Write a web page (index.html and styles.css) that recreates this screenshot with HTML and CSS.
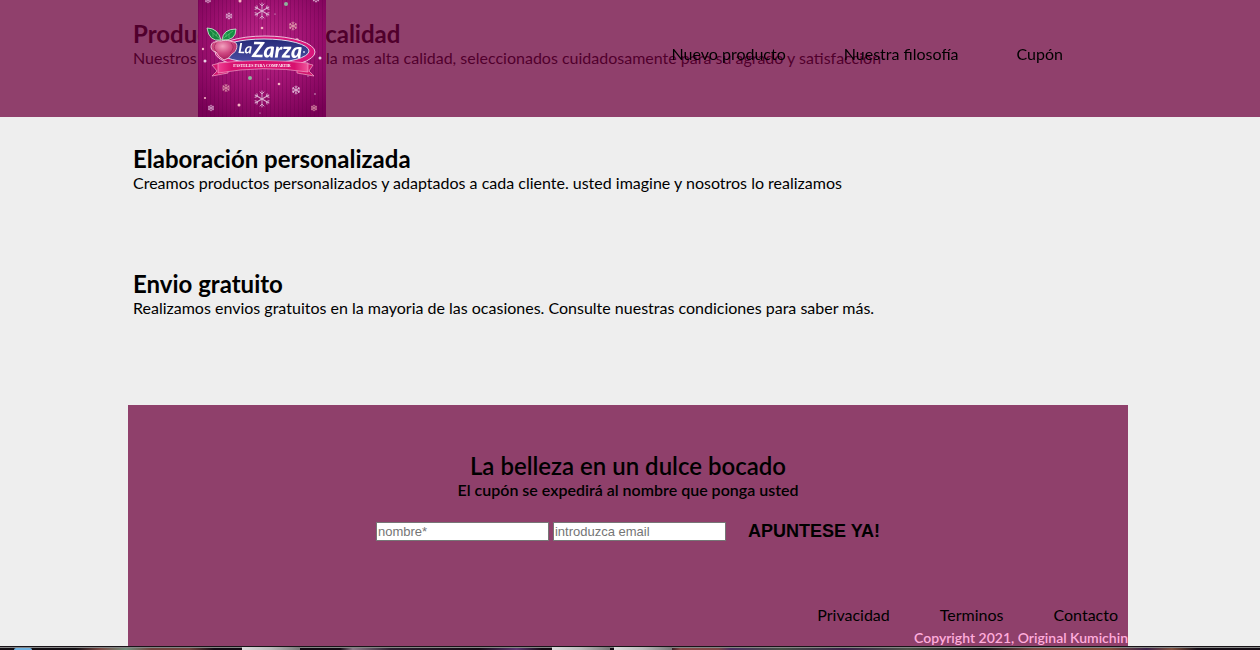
FILE: index.html
```
<!DOCTYPE html>
<html lang="es">
<head>
<meta charset="utf-8">
<title>La Zarza</title>
<link rel="stylesheet" href="styles.css">
</head>
<body>
<header class="header">
  <svg class="logo" viewBox="0 0 128 117" role="img" aria-label="La Zarza">
    <defs>
      <radialGradient id="glow" cx="50%" cy="38%" r="72%">
        <stop offset="0" stop-color="#bd2888"/><stop offset=".5" stop-color="#a01272"/><stop offset="1" stop-color="#780055"/>
      </radialGradient>
      <pattern id="stripes" width="4" height="4" patternUnits="userSpaceOnUse">
        <rect width="1" height="4" fill="#5c0045" opacity=".28"/>
      </pattern>
      <linearGradient id="blue" x1="0" y1="0" x2="0" y2="1">
        <stop offset="0" stop-color="#262b78"/><stop offset="1" stop-color="#4b50a5"/>
      </linearGradient>
      <linearGradient id="ribbon">
        <stop offset="0" stop-color="#ef3f93"/><stop offset=".15" stop-color="#d8116f"/><stop offset=".85" stop-color="#d8116f"/><stop offset="1" stop-color="#f0559c"/>
      </linearGradient>
      <radialGradient id="berry" cx="45%" cy="30%" r="70%">
        <stop offset="0" stop-color="#f3a2bf"/><stop offset=".5" stop-color="#d04b83"/><stop offset="1" stop-color="#a61a5a"/>
      </radialGradient>
      <g id="flake" fill="none" stroke-linecap="round">
        <g id="arms"><path d="M0-8V8M-2-7L0-5L2-7M-2 7L0 5L2 7"/></g>
        <use href="#arms" transform="rotate(60)"/><use href="#arms" transform="rotate(120)"/>
      </g>
    </defs>
    <rect width="128" height="117" fill="url(#glow)"/>
    <rect width="128" height="117" fill="url(#stripes)"/>
    <g stroke="#dcb0d2" stroke-width=".9">
      <use href="#flake" transform="translate(64 11)"/>
      <use href="#flake" transform="translate(64 99)"/>
      <use href="#flake" transform="translate(31 16) scale(.4)" stroke-width="1.8"/>
      <use href="#flake" transform="translate(98 90) scale(.5)" stroke-width="1.8"/>
      <use href="#flake" transform="translate(13 108) scale(.36)" stroke-width="1.8"/>
      <use href="#flake" transform="translate(10 0) scale(.36)" stroke-width="1.8"/>
      <use href="#flake" transform="translate(118 -1) scale(.4)" stroke-width="1.8"/>
    </g>
    <g stroke="#dd94a8" stroke-width="1.8">
      <use href="#flake" transform="translate(95 26) scale(.5)"/>
      <use href="#flake" transform="translate(28 88) scale(.45)"/>
      <use href="#flake" transform="translate(116 108) scale(.36)"/>
    </g>
    <g fill="#f5b4c4">
      <circle cx="42" cy="1" r="1.5"/><circle cx="64" cy="28" r="1.3"/><circle cx="99" cy="40" r="1.8"/>
      <circle cx="5" cy="49" r="1.2"/><circle cx="81" cy="84" r="1.3"/><circle cx="41" cy="105" r="1.5"/><circle cx="7" cy="98" r="1.1"/>
    </g>
    <g fill="#e8d0e4">
      <circle cx="7" cy="61" r="1.5"/><circle cx="122" cy="58" r="1.5"/><circle cx="77" cy="14" r=".6"/><circle cx="110" cy="76" r=".6"/><circle cx="70" cy="79" r=".6"/><circle cx="117" cy="94" r=".7"/><circle cx="62" cy="113" r=".6"/>
    </g>
    <g fill="#8db49b"><circle cx="88" cy="4" r="2"/><circle cx="52" cy="78" r="2"/></g>

    <path d="M14 65L30 61V73L14 76L19 71Z" fill="#d3186f" stroke="#f5a7ca" stroke-width=".7"/>
    <path d="M115 65L99 61V73L116 76L111 71Z" fill="#d3186f" stroke="#f5a7ca" stroke-width=".7"/>
    <ellipse cx="67" cy="52" rx="50" ry="16" fill="#d9157a" stroke="#eec0dc" stroke-width="1"/>
    <ellipse cx="66" cy="51" rx="45" ry="12" fill="url(#blue)" stroke="#d9def0" stroke-width="1"/>
    <path d="M20 63Q65 58 110 63V72Q65 65 20 73Z" fill="url(#ribbon)" stroke="#f19cc5" stroke-width=".7"/>
    <text class="logo-la" x="40" y="53" transform="rotate(3 40 53)">La</text>
    <text class="logo-name" x="54" y="57" transform="rotate(1 54 57)">Zarza</text>
    <circle cx="106" cy="52" r="1" fill="#cfd6ee"/>
    <text class="logo-tag" x="64" y="67">PASTELES PARA COMPARTIR</text>
    <path d="M23 41C29 39 34 42 36 42C41 43 39 52 34 54Q31 59 26 60Q20 57 18 52C11 51 12 42 17 42Q20 40 23 41Z" fill="url(#berry)" stroke="#f4cfdf" stroke-width=".9"/>
    <path d="M18 43Q14 48 19 52M33 43Q38 47 32 53" fill="none" stroke="#9e2859" stroke-width=".8"/>
    <path d="M23 40Q11 42 9 28Q20 28 23 40Z" fill="#15853f" stroke="#d8eedb" stroke-width=".8"/>
    <path d="M24 40Q25 29 38 29Q38 41 24 40Z" fill="#159044" stroke="#d8eedb" stroke-width=".8"/>
    <path d="M12 30L23 40L35 31M15 33V37M18 36L20 32M28 37V33M31 34V38" fill="none" stroke="#7ed58d" stroke-width=".5"/>
  </svg>
  <nav class="menu">
    <a href="#productos">Nuevo producto</a>
    <a href="#filosofia">Nuestra filosofía</a>
    <a href="#cupon">Cupón</a>
  </nav>
</header>

<div class="page">
  <main>
    <section class="feature" id="productos">
      <h2>Productos de alta calidad</h2>
      <p>Nuestros productos son de la mas alta calidad, seleccionados cuidadosamente para su agrado y satisfaccion</p>
    </section>
    <section class="feature" id="filosofia">
      <h2>Elaboración personalizada</h2>
      <p>Creamos productos personalizados y adaptados a cada cliente. usted imagine y nosotros lo realizamos</p>
    </section>
    <section class="feature">
      <h2>Envio gratuito</h2>
      <p>Realizamos envios gratuitos en la mayoria de las ocasiones. Consulte nuestras condiciones para saber más.</p>
    </section>
  </main>
  <div class="panel">
    <section class="coupon" id="cupon">
      <h2>La belleza en un dulce bocado</h2>
      <p class="coupon-note">El cupón se expedirá al nombre que ponga usted</p>
      <form class="form">
        <input class="field" type="text" placeholder="nombre*" aria-label="nombre">
        <input class="field" type="email" placeholder="introduzca email" aria-label="email">
        <button class="submit" type="button">APUNTESE YA!</button>
      </form>
    </section>
    <footer class="footer">
      <nav class="links">
        <a href="#privacidad">Privacidad</a>
        <a href="#terminos">Terminos</a>
        <a href="#contacto">Contacto</a>
      </nav>
      <p class="copyright">Copyright 2021, Original Kumichin</p>
    </footer>
  </div>
</div>
<div class="taskbar" aria-hidden="true">
  <span class="start"></span><span class="task"></span><span class="task task-second"></span><span class="task"></span>
</div>
</body>
</html>
```
FILE: styles.css
```
* {
  box-sizing: border-box;
  margin: 0;
  padding: 0;
}

body {
  background: #eee;
  color: #000;
  font: 16px/19px Lato, sans-serif;
  overflow: hidden;
}

a {
  color: inherit;
  text-decoration: none;
}

h2 {
  font-size: 24px;
  font-weight: 600;
  line-height: 29px;
}

.header {
  position: fixed;
  top: 0;
  left: 0;
  right: 0;
  z-index: 1;
  display: flex;
  align-items: flex-start;
  justify-content: space-between;
  padding: 0 197px 0 198px;
  background: rgba(109, 0, 60, 0.735);
}

.logo {
  display: block;
  width: 128px;
  height: 117px;
}

.logo text {
  font-family: Lato, sans-serif;
  fill: #fff;
}

.logo .logo-la {
  font-size: 14px;
  font-style: italic;
  font-weight: 700;
}

.logo .logo-name {
  font-size: 21px;
  font-style: italic;
  font-weight: 900;
}

.logo .logo-tag {
  font-family: "Liberation Serif", serif;
  font-size: 4px;
  font-weight: 700;
  text-anchor: middle;
}

.menu {
  display: flex;
  gap: 58px;
  padding-top: 44px;
}

.page {
  max-width: 1004px;
  margin: 0 auto;
  padding: 19px 4px 0 0;
}

.feature {
  min-height: 125px;
  padding: 0 5px;
}

.feature h2 {
  font-weight: 700;
}

.panel {
  margin-top: 11px;
  background: #8f406b;
}

.coupon {
  padding: 46px 0 64px;
  text-align: center;
}

.coupon-note {
  font-weight: 600;
}

.form {
  display: flex;
  align-items: center;
  justify-content: center;
  gap: 4px;
  padding-top: 22px;
}

.field {
  width: 173px;
  height: 19px;
  padding: 0 1px;
  border: 1px solid #767676;
  background: #fff;
  font: 13px/15px "Liberation Sans", Arial, sans-serif;
}

.field::placeholder {
  color: #757575;
}

.submit {
  padding: 0 0 0 18px;
  border: 0;
  background: none;
  font: 900 18px/20px "Liberation Sans", Arial, sans-serif;
}

.links {
  display: flex;
  justify-content: flex-end;
  gap: 50px;
  padding-right: 10px;
}

.copyright {
  padding-top: 4px;
  color: #ffaddc;
  font-size: 14px;
  font-weight: 600;
  text-align: right;
}

.taskbar {
  position: fixed;
  left: 0;
  right: 0;
  bottom: 0;
  z-index: 2;
  display: flex;
  height: 4px;
  padding-left: 14px;
  border-top: 1px solid #181318;
  background:
    linear-gradient(#858585, #858585) 0 0 / 100% 1px no-repeat,
    linear-gradient(90deg, #120d12 6%, #7d4a45 8%, #6f8f7c 10%, #70443f 12%, #70443f 15%, #140b14 17%, #140b14 27%, #8c7a88 28%, #2d2030 31%, #140b14 38%, #5c3470 41%, #140b14 43%, #140b14 53%, #8a4b4a 54%, #7c4848 57%, #4b2e60 58%, #465045 62%, #3b2048 67%, #4c5248 72%, #151015 78%, #7d4a45 82%, #85503c 88%, #3b2048 91%, #80503f 93%, #140b14 95%);
}

.start {
  width: 18px;
  height: 2px;
  margin: 1px 210px 0 0;
  border-radius: 9px 9px 0 0;
  background: #6fb2e0;
}

.task {
  width: 58px;
  margin-right: 4px;
  background: linear-gradient(100deg, #ddd, #bbb 50%, #777);
}

.task-second {
  margin-left: 248px;
}
```
